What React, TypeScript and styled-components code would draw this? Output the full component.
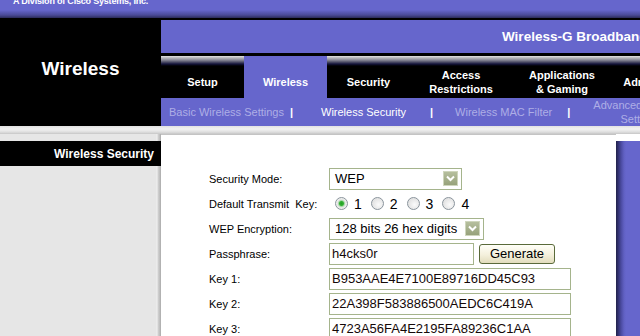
import { createGlobalStyle, styled } from "styled-components";

const GlobalStyle = createGlobalStyle`
  html, body {
    margin: 0;
    padding: 0;
    background: #ffffff;
    overflow: hidden;
  }
  body {
    font-family: "Liberation Sans", Arial, sans-serif;
  }
`;

const tabs = [
  { label: "Setup", width: 83 },
  { label: "Wireless", width: 83, active: true },
  { label: "Security", width: 83 },
  { label: "Access\nRestrictions", width: 102 },
  { label: "Applications\n& Gaming", width: 100 },
  { label: "Administration", width: 100 },
  { label: "Status", width: 80 },
];

const keys = [
  { label: "Key 1:", value: "B953AAE4E7100E89716DD45C93" },
  { label: "Key 2:", value: "22A398F583886500AEDC6C419A" },
  { label: "Key 3:", value: "4723A56FA4E2195FA89236C1AA" },
];

const Chevron = () => (
  <svg width="9" height="7" viewBox="0 0 9 7">
    <path d="M1 1.5 L4.5 5 L8 1.5" fill="none" stroke="#ffffff" strokeWidth="2" />
  </svg>
);

export default function App() {
  return (
    <>
      <GlobalStyle />
      <Page>
        <TopBar>
          <Division>A Division of Cisco Systems, Inc.</Division>
        </TopBar>

        <Header>
          <Brand>
            <Title>Wireless</Title>
          </Brand>
          <HeaderMain>
            <ProductBar>
              <ProductName>Wireless-G Broadband Router</ProductName>
            </ProductBar>
            <Tabs>
              {tabs.map((t) => (
                <Tab key={t.label} $width={t.width} $active={t.active}>
                  {t.label}
                </Tab>
              ))}
            </Tabs>
            <SubNav>
              <SubLink $gap={8}>Basic Wireless Settings</SubLink>
              <Sep $gap={6}>|</Sep>
              <SubLink $gap={28} $current>
                Wireless Security
              </SubLink>
              <Sep $gap={24}>|</Sep>
              <SubLink $gap={22}>Wireless MAC Filter</SubLink>
              <Sep $gap={15}>|</Sep>
              <SubLink $gap={23}>
                Advanced Wireless
                <br />
                Settings
              </SubLink>
            </SubNav>
          </HeaderMain>
        </Header>

        <Divider />

        <Content>
          <Side>
            <SectionTitle>Wireless Security</SectionTitle>
          </Side>
          <Panel>
            <Form>
              <Row>
                <Label>Security Mode:</Label>
                <Select $width={133}>
                  <span>WEP</span>
                  <Arrow>
                    <Chevron />
                  </Arrow>
                </Select>
              </Row>
              <Row>
                <Label>Default Transmit  Key:</Label>
                <Radios>
                  {[1, 2, 3, 4].map((n) => (
                    <RadioItem key={n}>
                      <Radio $checked={n === 1} />
                      <RadioText>{n}</RadioText>
                    </RadioItem>
                  ))}
                </Radios>
              </Row>
              <Row>
                <Label>WEP Encryption:</Label>
                <Select $width={155}>
                  <span>128 bits 26 hex digits</span>
                  <Arrow>
                    <Chevron />
                  </Arrow>
                </Select>
              </Row>
              <Row>
                <Label>Passphrase:</Label>
                <Controls>
                  <TextBox $width={145}>h4cks0r</TextBox>
                  <GenerateButton>Generate</GenerateButton>
                </Controls>
              </Row>
              {keys.map((k) => (
                <Row key={k.label}>
                  <Label>{k.label}</Label>
                  <TextBox $width={242}>{k.value}</TextBox>
                </Row>
              ))}
            </Form>
          </Panel>
          <Rail />
        </Content>
      </Page>
    </>
  );
}

const Page = styled.div`
  width: 640px;
  height: 336px;
  overflow: hidden;
  display: flex;
  flex-direction: column;
  background: #ffffff;
`;

const TopBar = styled.div`
  height: 18px;
  flex-shrink: 0;
  background: linear-gradient(
    #6666cc 0,
    #6666cc 10px,
    #5a5ab8 12px,
    #4a4a98 15px,
    #2a2a58 18px
  );
  overflow: hidden;
`;

const Division = styled.div`
  margin: -3px 0 0 13px;
  font-size: 9px;
  line-height: 9px;
  font-weight: bold;
  letter-spacing: -0.2px;
  color: #ffffff;
  white-space: nowrap;
`;

const Header = styled.div`
  height: 108px;
  flex-shrink: 0;
  display: flex;
  background: #000000;
`;

const Brand = styled.div`
  width: 161px;
  flex-shrink: 0;
  display: flex;
  justify-content: center;
  padding-top: 40px;
  box-sizing: border-box;
`;

const Title = styled.div`
  font-size: 19px;
  line-height: 22px;
  font-weight: bold;
  color: #ffffff;
`;

const HeaderMain = styled.div`
  flex: 1;
  min-width: 0;
  display: flex;
  flex-direction: column;
  padding-top: 2px;
`;

const ProductBar = styled.div`
  height: 33px;
  margin-bottom: 3px;
  display: flex;
  align-items: center;
  padding-left: 341px;
  background: #6666cc;
  overflow: hidden;
`;

const ProductName = styled.span`
  font-size: 13.5px;
  font-weight: bold;
  color: #ffffff;
  white-space: nowrap;
`;

const Tabs = styled.div`
  height: 42px;
  display: flex;
`;

const Tab = styled.div<{ $width: number; $active?: boolean }>`
  width: ${({ $width }) => $width}px;
  flex-shrink: 0;
  box-sizing: border-box;
  padding-top: 10px;
  display: flex;
  align-items: center;
  justify-content: center;
  text-align: center;
  white-space: pre;
  font-size: 11px;
  line-height: 14px;
  font-weight: bold;
  color: #ffffff;
  background: ${({ $active }) =>
    $active
      ? "#6666cc"
      : "linear-gradient(#e4e4e4 0, #b4b4b8 2px, #8a8a98 4px, #505068 6px, #14143c 8px, #000000 10px)"};
`;

const SubNav = styled.div`
  height: 28px;
  display: flex;
  align-items: center;
  background: #6666cc;
  white-space: nowrap;
`;

const SubLink = styled.span<{ $gap: number; $current?: boolean }>`
  margin-left: ${({ $gap }) => $gap}px;
  flex-shrink: 0;
  font-size: 11px;
  line-height: 14px;
  text-align: center;
  color: ${({ $current }) => ($current ? "#ffffff" : "#aeaee6")};
`;

const Sep = styled.span<{ $gap: number }>`
  margin-left: ${({ $gap }) => $gap}px;
  font-size: 11px;
  font-weight: bold;
  color: #ffffff;
`;

const Divider = styled.div`
  height: 8px;
  flex-shrink: 0;
  background: linear-gradient(
    #e2e2e2 0,
    #f2f2f2 3px,
    #e6e6e6 5px,
    #d4d4d4 7px,
    #c4c4c4 8px
  );
`;

const Content = styled.div`
  flex: 1;
  display: flex;
  background: #ffffff;
`;

const Side = styled.div`
  width: 161px;
  flex-shrink: 0;
  padding-top: 7px;
  box-sizing: border-box;
  background: linear-gradient(
    to right,
    #e6e6e6 0,
    #e6e6e6 156px,
    #f0f0f0 157px,
    #d2d2d2 158px,
    #bcbcbc 160px,
    #a8a8a8 161px
  );
`;

const SectionTitle = styled.div`
  height: 25px;
  display: flex;
  align-items: center;
  justify-content: flex-end;
  padding-right: 7px;
  background: #000000;
  font-size: 12px;
  font-weight: bold;
  color: #ffffff;
`;

const Panel = styled.div`
  flex: 1;
  border-top: 1px solid #c4c4c4;
`;

const Form = styled.div`
  padding: 31px 0 0 48px;
  display: flex;
  flex-direction: column;
`;

const Row = styled.div`
  height: 25px;
  display: grid;
  grid-template-columns: 120px auto;
  align-items: center;
`;

const Label = styled.span`
  font-size: 11px;
  color: #000000;
  white-space: pre;
`;

const Select = styled.div<{ $width: number }>`
  width: ${({ $width }) => $width}px;
  height: 22px;
  box-sizing: border-box;
  border: 1px solid #a5b48c;
  display: flex;
  align-items: center;
  justify-content: space-between;
  padding: 0 3px 0 5px;
  font-size: 13px;
  color: #000000;
  background: #ffffff;
`;

const Arrow = styled.span`
  width: 15px;
  height: 15px;
  box-sizing: border-box;
  border: 1px solid #cfd6bd;
  background: linear-gradient(#b6bf9e, #97a27b);
  display: flex;
  align-items: center;
  justify-content: center;
`;

const Radios = styled.div`
  display: flex;
  align-items: center;
  padding-left: 6px;
  gap: 9px;
`;

const RadioItem = styled.label`
  display: flex;
  align-items: center;
  gap: 6px;
`;

const Radio = styled.span<{ $checked?: boolean }>`
  width: 13px;
  height: 13px;
  box-sizing: border-box;
  border-radius: 50%;
  border: 1px solid #8a949c;
  background: ${({ $checked }) =>
    $checked
      ? "radial-gradient(circle, #22a022 0, #34b034 2px, #a6d8a6 3px, #e4e6e4 4px, #f6f6f6 6px)"
      : "radial-gradient(circle at 60% 60%, #fbfbfb 0, #e4e4e4 6px)"};
`;

const RadioText = styled.span`
  font-size: 14px;
  color: #000000;
`;

const Controls = styled.div`
  display: flex;
  align-items: center;
`;

const TextBox = styled.div<{ $width: number }>`
  width: ${({ $width }) => $width}px;
  height: 22px;
  box-sizing: border-box;
  border: 1px solid #a5b48c;
  display: flex;
  align-items: center;
  padding-left: 2px;
  font-size: 13px;
  color: #140808;
  background: #ffffff;
  white-space: nowrap;
  overflow: hidden;
`;

const GenerateButton = styled.button`
  width: 76px;
  height: 20px;
  margin-left: 5px;
  padding: 0;
  box-sizing: border-box;
  border: 1px solid #5a6a3a;
  border-radius: 3px;
  background: linear-gradient(#fffff8, #f4f0dc 55%, #e2dcbc);
  font-family: "Liberation Sans", Arial, sans-serif;
  font-size: 13px;
  color: #000000;
`;

const Rail = styled.div`
  width: 24px;
  flex-shrink: 0;
  margin-top: 7px;
  background: linear-gradient(
    to right,
    #22224a 0,
    #30306c 2px,
    #4a4aa0 5px,
    #6060c2 8px,
    #6666cc 10px
  );
`;
